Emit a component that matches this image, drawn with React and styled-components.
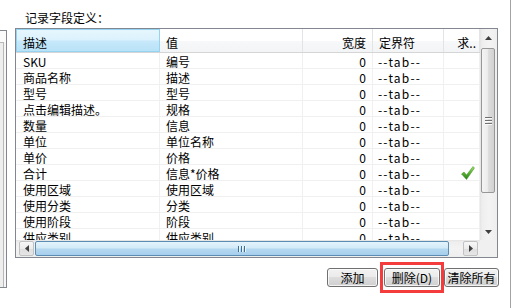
import React from "react";
import styled, { createGlobalStyle, css } from "styled-components";

const Global = createGlobalStyle`
  html, body { margin: 0; padding: 0; background: #fff; }
  body {
    font-family: "Noto Sans CJK SC", "Noto Sans", sans-serif;
    font-size: 12px;
    color: #000;
  }
`;

const Root = styled.div`
  display: flex;
  width: 519px;
  height: 308px;
  background: #fff;
  overflow: hidden;
`;

const LeftStub = styled.div`
  box-sizing: border-box;
  width: 7px;
  height: 258px;
  margin-top: 30px;
  border: 1px solid #828790;
  border-left: none;
  background: #f6f6f6;
  display: flex;
  flex-direction: column;
`;

const StubButton = styled.div`
  height: 11px;
  background: #fbfbfb;
`;

const StubThumb = styled.div`
  box-sizing: border-box;
  width: 4px;
  flex: 1;
  border-top: 1px solid #b8b8b8;
  border-right: 1px solid #b8b8b8;
  background: #eeeeee;
`;

const Main = styled.div`
  width: 484px;
  margin-left: 8px;
  display: flex;
  flex-direction: column;
`;

const Caption = styled.div`
  box-sizing: border-box;
  height: 28px;
  padding: 9px 0 0 10px;
  line-height: 17px;
`;

const ListView = styled.div`
  box-sizing: border-box;
  width: 483px;
  height: 230px;
  border: 1px solid #828790;
  display: grid;
  grid-template-columns: 464px 17px;
  grid-template-rows: 211px 17px;
  background: #fff;
`;

const ListBody = styled.div`
  overflow: hidden;
  background: #fff;
`;

const HeaderRow = styled.div`
  display: flex;
  box-sizing: border-box;
  height: 24px;
  border-bottom: 1px solid #d5d5d5;
  background: linear-gradient(#ffffff, #ffffff 50%, #f7f8fa 51%, #f3f4f6);
`;

const HeaderCell = styled.div`
  box-sizing: border-box;
  flex: 0 0 ${(p) => p.$w}px;
  padding: 5px ${(p) => p.$pr}px 0 ${(p) => p.$pl}px;
  line-height: 17px;
  text-align: ${(p) => p.$align};
  border-right: 1px solid #e3e4e6;
  white-space: nowrap;
  overflow: hidden;
  ${(p) =>
    p.$hot &&
    css`
      padding-top: 4px;
      padding-left: ${p.$pl - 1}px;
      border: 1px solid #96d3f0;
      background: linear-gradient(#e6f6fd 0%, #dcf2fd 45%, #c6e8fa 55%, #b9e2f7 100%);
    `}
`;

const Row = styled.div`
  display: flex;
  box-sizing: border-box;
  height: 16px;
  border-bottom: 1px solid #f0f0f0;
`;

const Cell = styled.div`
  box-sizing: border-box;
  flex: 0 0 ${(p) => p.$w}px;
  display: flex;
  justify-content: ${(p) => (p.$align === "right" ? "flex-end" : "flex-start")};
  padding: 1px ${(p) => p.$pr}px 0 ${(p) => p.$pl}px;
  line-height: 16px;
  letter-spacing: ${(p) => p.$ls || 0}px;
  border-right: 1px solid #f0f0f0;
  white-space: nowrap;
`;

const CheckCell = styled(Cell)`
  padding: 1px 4px 0 0;
  justify-content: flex-end;
  align-items: flex-start;
`;

const VScroll = styled.div`
  display: flex;
  flex-direction: column;
  background: linear-gradient(to right, #e4e4e4 0, #eeeeee 2px, #f3f3f3 50%, #eeeeee 100%);
`;

const HScroll = styled.div`
  display: flex;
  align-items: center;
  background: linear-gradient(#e4e4e4 0, #eeeeee 2px, #f3f3f3 50%, #eeeeee 100%);
`;

const Corner = styled.div`
  background: #f0f0f0;
`;

const ArrowBtn = styled.div`
  flex: 0 0 17px;
  height: 17px;
  display: flex;
  align-items: center;
  justify-content: center;
`;

const HArrowBtn = styled.div`
  box-sizing: border-box;
  flex: 0 0 15px;
  height: 15px;
  margin: ${(p) => p.$m};
  display: flex;
  align-items: center;
  justify-content: center;
  border: 1px solid #c2c2c2;
  border-radius: 2px;
  background: linear-gradient(#f7f7f7, #ececec 50%, #dedede 51%, #e6e6e6);
`;

const VTrack = styled.div`
  flex: 1;
  display: flex;
  flex-direction: column;
`;

const VThumb = styled.div`
  box-sizing: border-box;
  height: 145px;
  margin: 2px 2px 0 1px;
  border: 1px solid #979797;
  border-radius: 2px;
  background: linear-gradient(to right, #f4f4f4 0%, #ececec 45%, #dcdcdc 55%, #d2d2d2 100%);
  display: flex;
  flex-direction: column;
  align-items: center;
  justify-content: center;
  gap: 1px;
`;

const HThumb = styled.div`
  box-sizing: border-box;
  width: 414px;
  height: 15px;
  margin-left: 1px;
  border: 1px solid #5b8db4;
  border-radius: 2px;
  background: linear-gradient(#e4f3fc 0%, #d3eaf8 45%, #b5d8f0 55%, #a6cfec 100%);
  display: flex;
  align-items: center;
  justify-content: center;
  gap: 1px;
`;

const Spacer = styled.div`
  flex: 1;
`;

const GripH = styled.div`
  width: 7px;
  height: 1px;
  background: #707070;
  box-shadow: 0 1px 0 #fbfbfb;
  margin-bottom: 1px;
`;

const GripV = styled.div`
  width: 1px;
  height: 6px;
  background: #3b6e96;
  box-shadow: 1px 0 0 #eef7fd;
  margin-right: 1px;
`;

const ButtonRow = styled.div`
  display: flex;
  justify-content: flex-end;
  align-items: center;
  margin-top: 4px;
`;

const Button = styled.button`
  box-sizing: border-box;
  width: ${(p) => p.$w}px;
  height: 19px;
  padding: 0;
  border: 1px solid #707070;
  border-radius: 3px;
  background: linear-gradient(#f2f2f2 0%, #ebebeb 45%, #dddddd 50%, #cfcfcf 100%);
  box-shadow: inset 0 0 0 1px rgba(255, 255, 255, 0.75);
  font-family: "Noto Sans CJK SC", "Noto Sans", sans-serif;
  font-size: 12px;
  line-height: 17px;
  color: #000;
`;

const Highlight = styled.div`
  box-sizing: border-box;
  width: 64px;
  padding: 3px 1px;
  margin-left: 2px;
  border: 3px solid #f43c3c;
  display: flex;
  justify-content: center;
`;

const EdgeLine = styled.div`
  flex: 0 0 1px;
  height: 308px;
  margin-left: 11px;
  background: #a3a3a3;
`;

const cols = [
  { key: "desc", title: "描述", w: 144, align: "left", pl: 7, pr: 6, hot: true },
  { key: "val", title: "值", w: 143, align: "left", pl: 6, pr: 6 },
  { key: "width", title: "宽度", w: 70, align: "right", pl: 6, pr: 6 },
  { key: "delim", title: "定界符", w: 71, align: "left", pl: 6, pr: 6 },
  { key: "sum", title: "求..", w: 36, align: "right", pl: 2, pr: 3 },
];

const rows = [
  ["SKU", "编号"],
  ["商品名称", "描述"],
  ["型号", "型号"],
  ["点击编辑描述。", "规格"],
  ["数量", "信息"],
  ["单位", "单位名称"],
  ["单价", "价格"],
  ["合计", "信息*价格", true],
  ["使用区域", "使用区域"],
  ["使用分类", "分类"],
  ["使用阶段", "阶段"],
  ["供应类别", "供应类别"],
];

const Tri = ({ dir }) => {
  const pts = {
    up: "3.5,0 7,4 0,4",
    down: "0,0 7,0 3.5,4",
    left: "4,0 4,7 0,3.5",
    right: "0,0 4,3.5 0,7",
  }[dir];
  const vert = dir === "up" || dir === "down";
  return (
    <svg width={vert ? 7 : 4} height={vert ? 4 : 7} viewBox={vert ? "0 0 7 4" : "0 0 4 7"}>
      <polygon points={pts} fill="#404040" />
    </svg>
  );
};

const Check = () => (
  <svg width="14" height="14" viewBox="0 0 14 14">
    <defs>
      <linearGradient id="chk" x1="0" y1="0" x2="0" y2="1">
        <stop offset="0" stopColor="#9fe06a" />
        <stop offset="0.5" stopColor="#58b232" />
        <stop offset="1" stopColor="#2a7d1a" />
      </linearGradient>
    </defs>
    <path d="M0.5 8 L3 6 L5.5 9 L12 0.5 L13.5 2 L5.5 13.5 Z" fill="url(#chk)" stroke="#3d8a24" strokeWidth="0.5" />
  </svg>
);

export default function App() {
  return (
    <>
      <Global />
      <Root>
        <LeftStub>
          <StubButton />
          <StubThumb />
        </LeftStub>
        <Main>
          <Caption>记录字段定义：</Caption>
          <ListView>
            <ListBody>
              <HeaderRow>
                {cols.map((c) => (
                  <HeaderCell key={c.key} $w={c.w} $align={c.align} $pl={c.pl} $pr={c.pr} $hot={c.hot}>
                    {c.title}
                  </HeaderCell>
                ))}
              </HeaderRow>
              {rows.map(([d, v, checked]) => (
                <Row key={d}>
                  <Cell $w={144} $pl={7} $pr={6}>{d}</Cell>
                  <Cell $w={143} $pl={6} $pr={6}>{v}</Cell>
                  <Cell $w={70} $pl={6} $pr={6} $align="right">0</Cell>
                  <Cell $w={71} $pl={5} $pr={6} $ls={1.2}>--tab--</Cell>
                  <CheckCell $w={36} $pl={0} $pr={4}>{checked ? <Check /> : null}</CheckCell>
                </Row>
              ))}
            </ListBody>
            <VScroll>
              <ArrowBtn>
                <Tri dir="up" />
              </ArrowBtn>
              <VTrack>
                <VThumb>
                  <GripH />
                  <GripH />
                  <GripH />
                </VThumb>
              </VTrack>
              <ArrowBtn>
                <Tri dir="down" />
              </ArrowBtn>
            </VScroll>
            <HScroll>
              <HArrowBtn $m="0 0 0 3px">
                <Tri dir="left" />
              </HArrowBtn>
              <HThumb>
                <GripV />
                <GripV />
                <GripV />
              </HThumb>
              <Spacer />
              <HArrowBtn $m="0 2px 0 0">
                <Tri dir="right" />
              </HArrowBtn>
            </HScroll>
            <Corner />
          </ListView>
          <ButtonRow>
            <Button $w={51}>添加</Button>
            <Highlight>
              <Button $w={56}>删除(D)</Button>
            </Highlight>
            <Button $w={55}>清除所有</Button>
          </ButtonRow>
        </Main>
        <EdgeLine />
      </Root>
    </>
  );
}
